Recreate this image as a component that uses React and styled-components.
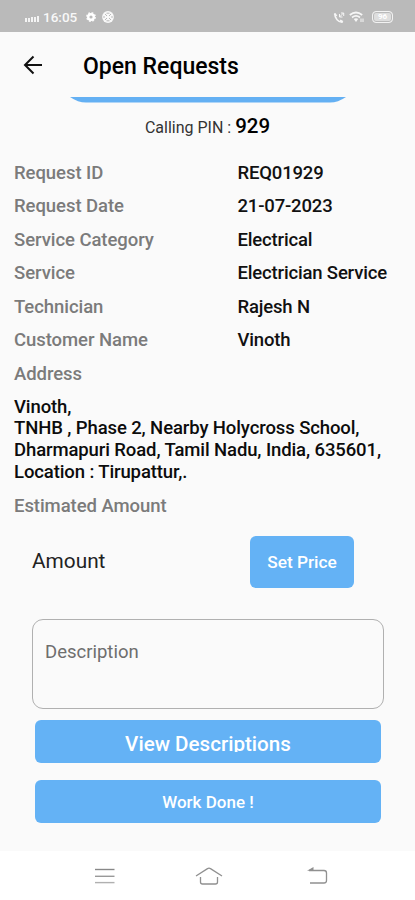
import React from "react";
import styled, { createGlobalStyle } from "styled-components";

const details = [
    { label: "Request ID", value: "REQ01929" },
    { label: "Request Date", value: "21-07-2023" },
    { label: "Service Category", value: "Electrical" },
    { label: "Service", value: "Electrician Service" },
    { label: "Technician", value: "Rajesh N" },
    { label: "Customer Name", value: "Vinoth" },
    { label: "Address", value: "" },
];

const address = [
    "Vinoth,",
    "TNHB , Phase 2, Nearby Holycross School,",
    "Dharmapuri Road, Tamil Nadu, India, 635601,",
    "Location : Tirupattur,.",
];

const App = () => {
    return (
        <Screen>
            <GlobalStyle />
            <StatusBar>
                <StatusGroup>
                    <svg width="14" height="8" viewBox="0 0 14 8" fill="#f4f4f4">
                        <rect x="0" y="4" width="2" height="4" />
                        <rect x="3" y="4" width="2" height="4" />
                        <rect x="6" y="3" width="2" height="5" />
                        <rect x="9" y="3" width="2" height="5" />
                        <rect x="12" y="2" width="2" height="6" />
                    </svg>
                    <Clock>16:05</Clock>
                    <GearIcon />
                    <BallIcon />
                </StatusGroup>
                <StatusGroup>
                    <CallIcon />
                    <WifiIcon />
                    <Battery>96</Battery>
                </StatusGroup>
            </StatusBar>

            <AppBar>
                <svg
                    width="20"
                    height="20"
                    viewBox="0 0 20 20"
                    fill="none"
                    stroke="#111"
                    strokeWidth="2"
                >
                    <path d="M19 10H2.5M10.5 1.5L2 10l8.5 8.5" />
                </svg>
                <Title>Open Requests</Title>
            </AppBar>

            <Content>
                <StripEdge width="276" height="6" viewBox="0 0 276 6">
                    <path d="M0 0h276Q268 5.5 260 5.5H16Q8 5.5 0 0z" fill="#64b0f3" />
                </StripEdge>
                <CallingPin>
                    Calling PIN : <Pin>929</Pin>
                </CallingPin>

                <DetailList>
                    {details.map((v) => (
                        <DetailRow key={v.label}>
                            <Label>{v.label}</Label>
                            <Value>{v.value}</Value>
                        </DetailRow>
                    ))}
                </DetailList>
                <Address>
                    {address.map((line) => (
                        <div key={line}>{line}</div>
                    ))}
                </Address>
                <DetailRow>
                    <Label>Estimated Amount</Label>
                </DetailRow>

                <AmountRow>
                    <Amount>Amount</Amount>
                    <PriceButton>Set Price</PriceButton>
                </AmountRow>

                <Description>Description</Description>
                <WideButton>
                    <ClippedText>View Descriptions</ClippedText>
                </WideButton>
                <WideButton $last>Work Done !</WideButton>
            </Content>

            <NavBar>
                <svg width="20" height="18" viewBox="0 0 20 18" strokeWidth="1.4">
                    <path d="M0 2.5h19.5" stroke="#888" />
                    <path d="M0 9.3h19.5" stroke="#999" />
                    <path d="M0 15.6h19.5" stroke="#b0b0b0" />
                </svg>
                <svg
                    width="28"
                    height="18"
                    viewBox="0 0 28 18"
                    fill="none"
                    stroke="#909090"
                    strokeWidth="1.3"
                >
                    <path d="M1 9L12.5 1.6Q14 .8 15.5 1.6L27 9" />
                    <path d="M5.5 10V15Q5.5 17 7.5 17H20.5Q22.5 17 22.5 15V10" />
                </svg>
                <svg
                    width="21"
                    height="18"
                    viewBox="0 0 21 18"
                    fill="none"
                    stroke="#909090"
                    strokeWidth="1.3"
                >
                    <path d="M2 3.5H17Q19.5 3.5 19.5 6V13.5Q19.5 16 17 16H3" />
                    <path d="M6.5 0L0 3.7h6.5z" fill="#909090" stroke="none" />
                </svg>
            </NavBar>
        </Screen>
    );
};

const GearIcon = () => (
    <StatusIcon $gap={8} width="12" height="12" viewBox="0 0 12 12">
        <circle
            cx="6"
            cy="6"
            r="4.2"
            fill="none"
            stroke="#f4f4f4"
            strokeWidth="1.6"
            strokeDasharray="1.8 1.5"
        />
        <circle cx="6" cy="6" r="2.8" fill="none" stroke="#fff" strokeWidth="2.4" />
    </StatusIcon>
);

const BallIcon = () => (
    <StatusIcon $gap={5} width="12" height="12" viewBox="0 0 12 12">
        <circle cx="6" cy="6" r="5.9" fill="#f8f8f8" />
        <g fill="none" stroke="#bababa" strokeWidth="1">
            <path d="M3 3l2 2M9 3L7 5M3 9l2-2M9 9L7 7" />
            <path d="M4.5 2.2h3M4.5 9.8h3M2 5v2M10 5v2" />
        </g>
    </StatusIcon>
);

const CallIcon = () => (
    <StatusIcon width="12" height="12" viewBox="0 0 12 12" fill="none" stroke="#f6f6f6">
        <path d="M1.8 1.5C1.5 6 5.5 10.5 9.5 10.2" strokeWidth="1.5" />
        <path d="M1.5 1.5l2 2.5M7 8.3l2.8 1.6" strokeWidth="2" />
        <path d="M10.5 1L6.5 5M6.5 2v3h3M8 1h2.7v3" strokeWidth="1" />
    </StatusIcon>
);

const WifiIcon = () => (
    <StatusIcon
        $gap={4}
        width="15"
        height="12"
        viewBox="0 0 15 12"
        fill="none"
        stroke="#f6f6f6"
        strokeWidth="1.7"
    >
        <path d="M.8 4Q7 -1 13.2 4M3 6.5Q7 3.3 11 6.5" />
        <path d="M4.8 8Q7 6.5 9.2 8L7 11z" fill="#f6f6f6" stroke="none" />
        <path d="M12 7.5v3.5M14 7.5v3.5" strokeWidth="1" />
    </StatusIcon>
);

export default App;

const GlobalStyle = createGlobalStyle`
    * {
        box-sizing: border-box;
    }
    body {
        margin: 0;
        background-color: #fafafa;
        font-family: Roboto, "Liberation Sans", sans-serif;
    }
`;
const Screen = styled.main`
    display: flex;
    flex-direction: column;
    width: 415px;
    height: 900px;
    overflow: hidden;
    color: #111;
    background-color: #fafafa;
`;
const StatusBar = styled.header`
    display: flex;
    justify-content: space-between;
    align-items: center;
    height: 32px;
    padding: 2px 22px 0 25px;
    background-color: #bababa;
`;
const StatusGroup = styled.div`
    display: flex;
    align-items: center;

    svg:first-child {
        margin-top: 2px;
    }
`;
const StatusIcon = styled.svg`
    margin-left: ${(props) => props.$gap || 0}px;
`;
const Clock = styled.span`
    margin-left: 4px;
    font-size: 13.5px;
    font-weight: 500;
    color: #f8f8f8;
`;
const Battery = styled.span`
    width: 21px;
    height: 12px;
    margin-left: 8px;
    border: 1px solid #f2f2f2;
    border-radius: 4px;
    box-shadow: inset 0 0 0 1px #bababa;
    background-color: #dedede;
    color: #fff;
    font-size: 8px;
    font-weight: 700;
    line-height: 10px;
    text-align: center;
`;
const AppBar = styled.div`
    display: flex;
    align-items: center;
    height: 65px;
    padding: 3px 0 0 23px;

    svg {
        margin-bottom: 3px;
    }
`;
const Title = styled.h1`
    margin: 0 0 0 40px;
    font-size: 23px;
    font-weight: 500;
    color: #000;
`;
const Content = styled.section`
    height: 754px;
`;
const StripEdge = styled.svg`
    display: block;
    margin: 0 auto;
`;
const CallingPin = styled.div`
    height: 48px;
    line-height: 46px;
    font-size: 16px;
    text-align: center;
    color: #333;
`;
const Pin = styled.span`
    font-size: 20.5px;
    font-weight: 500;
    color: #000;
`;
const DetailList = styled.div`
    padding-top: 5.5px;
`;
const DetailRow = styled.div`
    display: flex;
    height: 33.5px;
    padding-left: 14px;
    font-size: 18.5px;
    font-weight: 500;
    letter-spacing: -0.1px;
    line-height: 33.5px;
    white-space: nowrap;
`;
const Label = styled.div`
    width: 223.5px;
    letter-spacing: -0.06px;
    color: #7b7b7b;
`;
const Value = styled.div`
    letter-spacing: -0.17px;
    color: #111;
`;
const Address = styled.div`
    padding: 5.5px 0 6px 14px;
    font-size: 18.5px;
    font-weight: 500;
    letter-spacing: -0.11px;
    line-height: 21.8px;
    white-space: nowrap;
    color: #0c0c0c;
`;
const AmountRow = styled.div`
    display: flex;
    justify-content: space-between;
    align-items: center;
    height: 52px;
    margin: 13px 61px 0 32px;
`;
const Amount = styled.div`
    margin-bottom: 2px;
    font-size: 20.8px;
    color: #222;
`;
const PriceButton = styled.button`
    width: 104px;
    height: 52px;
    padding: 0 0 1px;
    border: none;
    border-radius: 6px;
    font-family: inherit;
    font-size: 17.3px;
    font-weight: 500;
    color: #fff;
    background-color: #64b2f5;
`;
const Description = styled.div`
    height: 90px;
    margin: 31px 31px 11px 32px;
    padding: 21px 12px;
    border: 1px solid #b0b0b0;
    border-radius: 11px;
    font-size: 18.5px;
    line-height: 22px;
    color: #6e6e6e;
`;
const WideButton = styled.button`
    display: flex;
    justify-content: center;
    align-items: center;
    width: 346px;
    height: 43px;
    margin: ${(props) => (props.$last ? "17px" : "0")} 0 0 35px;
    padding: 0;
    border: none;
    border-radius: 6px;
    font-family: inherit;
    font-size: 17px;
    font-weight: 500;
    color: #fff;
    background-color: #64b2f5;
`;
const ClippedText = styled.span`
    height: 20px;
    overflow: hidden;
    font-size: 20.6px;
    line-height: 25px;
`;
const NavBar = styled.nav`
    display: flex;
    align-items: center;
    justify-content: space-between;
    flex: 1;
    padding: 0 87px 0 95px;
    background-color: #fff;

    svg:nth-child(2) {
        margin-right: 5px;
    }
`;
